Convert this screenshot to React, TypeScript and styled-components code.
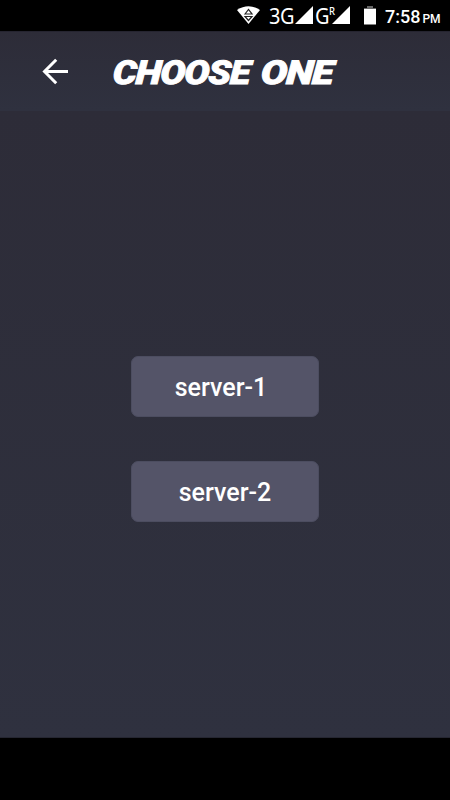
import React from "react";
import styled, { createGlobalStyle } from "styled-components";

const GlobalStyle = createGlobalStyle`
  * { box-sizing: border-box; }
  body { margin: 0; background: #000; font-family: Roboto, sans-serif; }
`;

const Screen = styled.div`
  width: 450px;
  height: 800px;
  display: flex;
  flex-direction: column;
  background: #000;
  color: #fff;
  overflow: hidden;
`;

const StatusBar = styled.div`
  height: 31px;
  flex: none;
  display: flex;
  align-items: flex-start;
  padding: 6px 0 0 237px;
  line-height: 20px;
  white-space: nowrap;
`;

const StatusIcon = styled.svg<{ $gap?: number }>`
  display: block;
  flex: none;
  margin-left: ${(p) => p.$gap ?? 0}px;
`;

const Network = styled.span<{ $width: number; $gap?: number }>`
  width: ${(p) => p.$width}px;
  margin-left: ${(p) => p.$gap ?? 0}px;
  flex: none;
  display: flex;
  align-items: flex-start;
  font-family: "Noto Sans", sans-serif;
  font-size: 21px;
  letter-spacing: -0.5px;
  transform: scaleX(0.95);
  transform-origin: left;
`;

const Roaming = styled.span`
  font-size: 10px;
  font-weight: 500;
  line-height: 10px;
  letter-spacing: 0;
`;

const Clock = styled.span`
  margin-left: 9px;
  font-size: 18px;
  font-weight: 500;
  line-height: 21px;
`;

const Meridiem = styled.span`
  margin-left: 2px;
  font-size: 12px;
`;

const Header = styled.header`
  height: 80px;
  flex: none;
  display: flex;
  align-items: center;
  padding: 0 0 0 42px;
  background: linear-gradient(#2d2c38, #2f313f);
  border-top: 1px solid #252430;
`;

const Back = styled.button`
  width: 28px;
  height: 28px;
  padding: 0;
  border: 0;
  background: none;
  color: #fff;
`;

const Title = styled.h1`
  margin: 3px 0 0 43px;
  display: flex;
  gap: 9px;
  font-family: Roboto, sans-serif;
  font-size: 33px;
  font-weight: 900;
  font-style: italic;
  line-height: 34px;
  letter-spacing: -1px;
  white-space: nowrap;
  -webkit-text-stroke: 0.9px #fff;
`;

const Word = styled.span<{ $width: number; $scale: number }>`
  width: ${(p) => p.$width}px;
  transform: scaleX(${(p) => p.$scale}) skewX(-3deg);
  transform-origin: left;
`;

const Main = styled.main`
  height: 627px;
  flex: none;
  display: flex;
  flex-direction: column;
  align-items: center;
  gap: 44px;
  padding-top: 245px;
  background: linear-gradient(#2d2c38, #2f313f);
  border-bottom: 1px solid #252631;
`;

const ServerButton = styled.button<{ $shift?: number }>`
  width: 188px;
  height: 61px;
  padding: 3px ${(p) => p.$shift ?? 0}px 0 0;
  border: 1px solid #4c4d60;
  border-radius: 7px;
  background: #545468;
  color: #fff;
  font: 500 25px/30px Roboto, sans-serif;
`;

const SignalIcon = ({ gap = 0 }: { gap?: number }) => (
  <StatusIcon $gap={gap} width="18" height="19" viewBox="0 0 18 19">
    <path d="M0 18 18 0V18Z" fill="#fff" />
  </StatusIcon>
);

export default function App() {
  return (
    <>
      <GlobalStyle />
      <Screen>
        <StatusBar>
          <StatusIcon width="23" height="19" viewBox="0 0 23 19">
            <path d="M0 4Q11.5-3.5 23 4L11.5 18Z" fill="#fff" />
            <path d="M8 8 11.5 3.5 15 8ZM8 10.5H15L11.5 14.5Z" fill="none" stroke="#222" strokeWidth="1.2" />
          </StatusIcon>
          <Network $width={26} $gap={9}>3G</Network>
          <SignalIcon />
          <Network $width={17} $gap={2}>G<Roaming>R</Roaming></Network>
          <SignalIcon />
          <StatusIcon $gap={14} width="12" height="19" viewBox="0 0 12 19">
            <path d="M3 0H9V2H12V3H0V2H3Z" fill="#666" />
            <path d="M0 3H12V18.5H0Z" fill="#fff" />
          </StatusIcon>
          <Clock>7:58<Meridiem>PM</Meridiem></Clock>
        </StatusBar>
        <Header>
          <Back aria-label="Back">
            <svg width="28" height="28" viewBox="0 0 28 28">
              <path d="M26 13.5H3M14.2 1.7 2.5 13.5 14.2 25.3" fill="none" stroke="#fff" strokeWidth="3" />
            </svg>
          </Back>
          <Title>
            <Word $width={139} $scale={1.14}>CHOOSE</Word>
            <Word $width={75} $scale={1.2}>ONE</Word>
          </Title>
        </Header>
        <Main>
          <ServerButton $shift={8}>server-1</ServerButton>
          <ServerButton>server-2</ServerButton>
        </Main>
      </Screen>
    </>
  );
}
